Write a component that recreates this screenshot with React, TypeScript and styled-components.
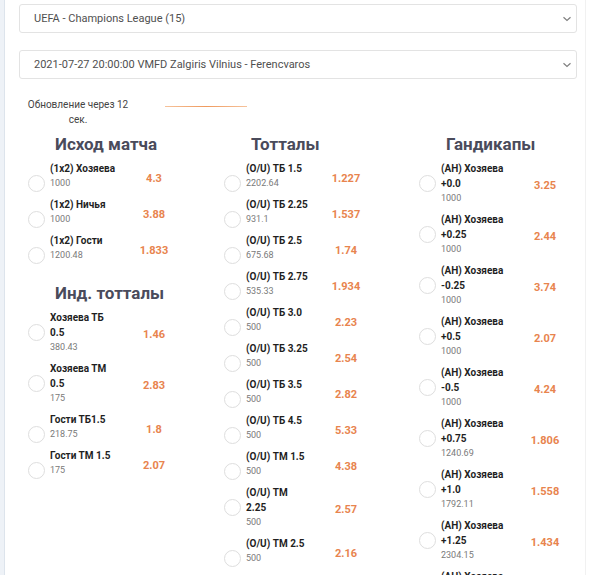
import React from "react";
import styled, { createGlobalStyle } from "styled-components";

const GlobalStyle = createGlobalStyle`
  html, body { margin: 0; padding: 0; background: #fff; overflow: hidden; }
  body { font-family: Roboto, "Liberation Sans", Arial, sans-serif; }
`;

const Shell = styled.div`
  display: flex;
  min-height: 575px;
`;

const Rail = styled.div`
  width: 4px;
  flex: none;
  background: #eef2f7;
  border-right: 1px solid #dde4ec;
`;

const Panel = styled.div`
  width: 581px;
  flex: none;
  box-sizing: border-box;
  padding: 4px 8px 0 14px;
  border-right: 1px solid #f1f1f1;
`;

const Select = styled.div<{ $mt?: number }>`
  height: 29px;
  box-sizing: border-box;
  margin-top: ${(p) => p.$mt ?? 0}px;
  border: 1px solid #e3e3e3;
  border-radius: 3px;
  display: flex;
  align-items: center;
  justify-content: space-between;
  padding: 0 4px 0 14px;
  font-size: 11px;
  color: #4f4f4f;
  white-space: nowrap;
`;

const UpdateRow = styled.div`
  display: flex;
  align-items: flex-start;
  margin-top: 18px;
  padding-left: 3px;
`;

const UpdateText = styled.div`
  width: 112px;
  text-align: center;
  font-size: 10px;
  line-height: 15px;
  color: #444;
`;

const Progress = styled.div`
  width: 82px;
  height: 1px;
  margin: 9px 0 0 31px;
  background: linear-gradient(90deg, #f6c39c, #ef9a5e 50%, #f6c39c);
`;

const Columns = styled.div`
  display: grid;
  grid-template-columns: 196px 195px 1fr;
  margin-top: 7px;
`;

const Column = styled.div`
  padding-left: 9px;
  min-width: 0;
`;

const Heading = styled.h2<{ $mt?: number }>`
  margin: ${(p) => p.$mt ?? 0}px 0 4px 27px;
  font-size: 17px;
  line-height: 20px;
  font-weight: 700;
  color: #4a4b5b;
  white-space: nowrap;
`;

const Row = styled.div`
  display: flex;
  align-items: flex-start;
  padding: 3px 0 4px;
`;

const Radio = styled.span`
  flex: none;
  width: 17px;
  height: 17px;
  margin: 14px 0 -9px;
  box-sizing: border-box;
  border: 1px solid #dedede;
  border-radius: 50%;
  background: #fff;
`;

const Info = styled.div<{ $w: number }>`
  flex: none;
  width: ${(p) => p.$w}px;
  margin-left: 5px;
`;

const Name = styled.div`
  font-size: 10px;
  line-height: 15px;
  font-weight: 700;
  color: #1f1f1f;
`;

const Amount = styled.div`
  font-size: 9px;
  line-height: 14px;
  color: #7a7a7a;
`;

const Odds = styled.div<{ $w: number }>`
  flex: none;
  width: ${(p) => p.$w}px;
  align-self: center;
  padding-top: 5px;
  text-align: center;
  font-size: 11px;
  font-weight: 700;
  color: #e8844e;
`;

type Bet = [string, string, string];

const Chevron = () => (
  <svg width="10" height="6" viewBox="0 0 10 6" fill="none">
    <path d="M1.5 1.2 L5 4.5 L8.5 1.2" stroke="#808080" strokeWidth="1.2" />
  </svg>
);

const BetRow = ({ bet, lw, ow }: { bet: Bet; lw: number; ow: number }) => (
  <Row>
    <Radio />
    <Info $w={lw}>
      <Name>{bet[0]}</Name>
      <Amount>{bet[1]}</Amount>
    </Info>
    <Odds $w={ow}>{bet[2]}</Odds>
  </Row>
);

const outcome: Bet[] = [
  ["(1x2) Хозяева", "1000", "4.3"],
  ["(1x2) Ничья", "1000", "3.88"],
  ["(1x2) Гости", "1200.48", "1.833"],
];

const indTotals: Bet[] = [
  ["Хозяева ТБ 0.5", "380.43", "1.46"],
  ["Хозяева ТМ 0.5", "175", "2.83"],
  ["Гости ТБ1.5", "218.75", "1.8"],
  ["Гости ТМ 1.5", "175", "2.07"],
];

const totals: Bet[] = [
  ["(O/U) ТБ 1.5", "2202.64", "1.227"],
  ["(O/U) ТБ 2.25", "931.1", "1.537"],
  ["(O/U) ТБ 2.5", "675.68", "1.74"],
  ["(O/U) ТБ 2.75", "535.33", "1.934"],
  ["(O/U) ТБ 3.0", "500", "2.23"],
  ["(O/U) ТБ 3.25", "500", "2.54"],
  ["(O/U) ТБ 3.5", "500", "2.82"],
  ["(O/U) ТБ 4.5", "500", "5.33"],
  ["(O/U) ТМ 1.5", "500", "4.38"],
  ["(O/U) ТМ 2.25", "500", "2.57"],
  ["(O/U) ТМ 2.5", "500", "2.16"],
];

const handicaps: Bet[] = [
  ["(АН) Хозяева +0.0", "1000", "3.25"],
  ["(АН) Хозяева +0.25", "1000", "2.44"],
  ["(АН) Хозяева -0.25", "1000", "3.74"],
  ["(АН) Хозяева +0.5", "1000", "2.07"],
  ["(АН) Хозяева -0.5", "1000", "4.24"],
  ["(АН) Хозяева +0.75", "1240.69", "1.806"],
  ["(АН) Хозяева +1.0", "1792.11", "1.558"],
  ["(АН) Хозяева +1.25", "2304.15", "1.434"],
  ["(АН) Хозяева +1.5", "2815.9", "1.335"],
];

export default function App() {
  return (
    <>
      <GlobalStyle />
      <Shell>
        <Rail />
        <Panel>
          <Select>
            <span>UEFA - Champions League (15)</span>
            <Chevron />
          </Select>
          <Select $mt={17}>
            <span>2021-07-27 20:00:00 VMFD Zalgiris Vilnius - Ferencvaros</span>
            <Chevron />
          </Select>
          <UpdateRow>
            <UpdateText>Обновление через 12 сек.</UpdateText>
            <Progress />
          </UpdateRow>
          <Columns>
            <Column>
              <Heading>Исход матча</Heading>
              {outcome.map((b) => (
                <BetRow key={b[0]} bet={b} lw={69} ow={70} />
              ))}
              <Heading $mt={17}>Инд. тотталы</Heading>
              {indTotals.map((b) => (
                <BetRow key={b[0]} bet={b} lw={69} ow={70} />
              ))}
            </Column>
            <Column>
              <Heading>Тотталы</Heading>
              {totals.map((b) => (
                <BetRow key={b[0]} bet={b} lw={63} ow={74} />
              ))}
            </Column>
            <Column>
              <Heading>Гандикапы</Heading>
              {handicaps.map((b) => (
                <BetRow key={b[0]} bet={b} lw={70} ow={68} />
              ))}
            </Column>
          </Columns>
        </Panel>
      </Shell>
    </>
  );
}
